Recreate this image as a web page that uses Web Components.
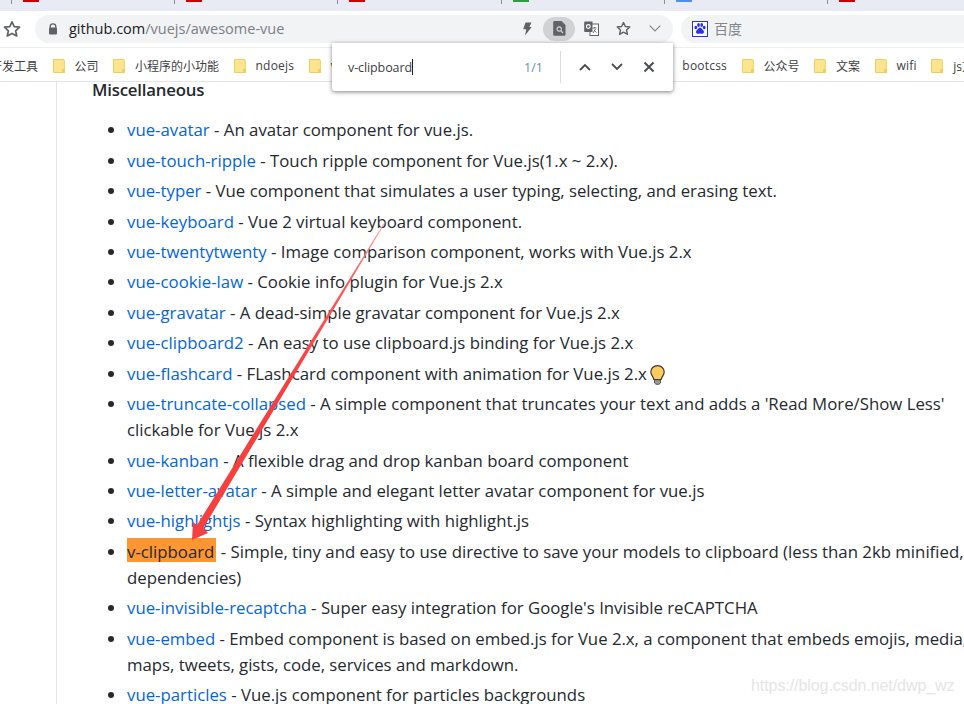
<!DOCTYPE html>
<html lang="zh">
<head>
<meta charset="utf-8">
<title>awesome-vue</title>
<style>
  html, body { margin: 0; height: 704px; overflow: hidden; background: #fff; }
  body { position: relative; font-family: "Open Sans", "Noto Sans CJK SC", sans-serif; }
</style>
</head>
<body>
<tab-strip>
  <tab-stub color="#cc0000"></tab-stub>
  <tab-stub color="#cc0000"></tab-stub>
  <tab-stub color="#cc0000"></tab-stub>
  <tab-stub color="#2e9e3f"></tab-stub>
  <tab-stub color="#4a90f0"></tab-stub>
  <tab-stub color="#cc0000"></tab-stub>
</tab-strip>
<url-toolbar></url-toolbar>
<bookmark-bar>
  <bookmark-item plain style="margin-left:-10px">开发工具</bookmark-item>
  <bookmark-item>公司</bookmark-item>
  <bookmark-item>小程序的小功能</bookmark-item>
  <bookmark-item style="letter-spacing:.2px">ndoejs</bookmark-item>
  <bookmark-item style="letter-spacing:.2px;margin-right:316.5px">vue</bookmark-item>
  <bookmark-item plain style="letter-spacing:.2px">bootcss</bookmark-item>
  <bookmark-item>公众号</bookmark-item>
  <bookmark-item>文案</bookmark-item>
  <bookmark-item style="letter-spacing:.2px">wifi</bookmark-item>
  <bookmark-item>js文档</bookmark-item>
</bookmark-bar>
<readme-page>
  <readme-item><a>vue-avatar</a> - An avatar component for vue.js.</readme-item>
  <readme-item><a>vue-touch-ripple</a> - Touch ripple component for Vue.js(1.x ~ 2.x).</readme-item>
  <readme-item><a>vue-typer</a> - Vue component that simulates a user typing, selecting, and erasing text.</readme-item>
  <readme-item><a>vue-keyboard</a> - Vue 2 virtual keyboard component.</readme-item>
  <readme-item><a>vue-twentytwenty</a> - Image comparison component, works with Vue.js 2.x</readme-item>
  <readme-item><a>vue-cookie-law</a> - Cookie info plugin for Vue.js 2.x</readme-item>
  <readme-item><a>vue-gravatar</a> - A dead-simple gravatar component for Vue.js 2.x</readme-item>
  <readme-item><a>vue-clipboard2</a> - An easy to use clipboard.js binding for Vue.js 2.x</readme-item>
  <readme-item><a>vue-flashcard</a> - FLashcard component with animation for Vue.js 2.x <bulb-icon></bulb-icon></readme-item>
  <readme-item><a>vue-truncate-collapsed</a> - A simple component that truncates your text and adds a 'Read More/Show Less'<br>clickable for Vue.js 2.x</readme-item>
  <readme-item><a>vue-kanban</a> - A flexible drag and drop kanban board component</readme-item>
  <readme-item><a>vue-letter-avatar</a> - A simple and elegant letter avatar component for vue.js</readme-item>
  <readme-item><a>vue-highlightjs</a> - Syntax highlighting with highlight.js</readme-item>
  <readme-item><mark>v-clipboard</mark> - Simple, tiny and easy to use directive to save your models to clipboard (less than 2kb minified, no<br>dependencies)</readme-item>
  <readme-item><a>vue-invisible-recaptcha</a> - Super easy integration for Google's Invisible reCAPTCHA</readme-item>
  <readme-item style="letter-spacing:-.02px"><a>vue-embed</a> - Embed component is based on embed.js for Vue 2.x, a component that embeds emojis, media,<br>maps, tweets, gists, code, services and markdown.</readme-item>
  <readme-item><a>vue-particles</a> - Vue.js component for particles backgrounds</readme-item>
</readme-page>
<find-bar></find-bar>
<red-arrow></red-arrow>
<blog-watermark>https://blog.csdn.net/dwp_wz</blog-watermark>

<script>
// tabs, only the bottom few pixels are visible
class TabStrip extends HTMLElement {
  constructor() {
    super();
    this.attachShadow({ mode: "open" }).innerHTML = `
      <style>
        :host { display: flex; height: 11px; background: #e8ebf4; padding-left: 11px; overflow: hidden; }
      </style>
      <slot></slot>`;
  }
}

class TabStub extends HTMLElement {
  constructor() {
    super();
    const color = this.getAttribute("color");
    this.attachShadow({ mode: "open" }).innerHTML = `
      <style>
        :host { display: block; width: 163.2px; flex: none; }
        .sep { width: 1px; height: 4px; background: #8a8d93; }
        .fav { width: 16px; height: 2px; margin: -4px 0 0 12px; background: ${color}; }
      </style>
      <div class="sep"></div>
      <div class="fav"></div>`;
  }
}

const STAR = `<path d="M8 1.6l2 4.3 4.7.5-3.5 3.2 1 4.600L8 11.900l-4.200 2.300 1-4.600L1.300 6.400 6 5.900z" fill="none" stroke="#5f6368" stroke-width="1.5" stroke-linejoin="round"/>`;

class UrlToolbar extends HTMLElement {
  constructor() {
    super();
    this.attachShadow({ mode: "open" }).innerHTML = `
      <style>
        :host {
          display: flex; align-items: center; box-sizing: border-box; height: 37px; padding: 4px 0 5px 3px;
          background: #fff; border-bottom: 1px solid #eceef0; font-size: 14.5px;
        }
        svg { display: block; flex: none; }
        .star { margin-right: 14px; }
        .omni {
          flex: none; width: 638px; height: 28px; box-sizing: border-box; border-radius: 14px; background: #f1f3f4;
          display: flex; align-items: center; padding-left: 13px;
        }
        .url { margin-left: 11px; color: #7b8087; }
        .url b { font-weight: 400; color: #202124; }
        .actions { margin-left: auto; display: flex; align-items: center; gap: 0; }
        .slot { width: 32px; height: 24px; display: flex; align-items: center; justify-content: center; border-radius: 12px; }
        .on { background: #d0d2d3; }
        .search {
          flex: 1; margin-left: 8px; height: 28px; border-radius: 14px 0 0 14px; background: #f1f3f4;
          display: flex; align-items: center; padding-left: 11px; color: #80868b; font-size: 14px;
          font-family: "Noto Sans CJK SC", sans-serif;
        }
        .search span { margin: -2px 0 0 6px; }
      </style>
      <svg class="star" width="18" height="18" viewBox="0 0 16 16">${STAR}</svg>
      <div class="omni">
        <svg width="10" height="12" viewBox="0 0 10 12"><path d="M2.200 5V3.600a2.800 2.800 0 0 1 5.600 0V5" fill="none" stroke="#5f6368" stroke-width="1.300"/><rect x="1" y="4.600" width="8" height="7" rx="1" fill="#5f6368"/></svg>
        <span class="url"><b>github.com</b>/vuejs/awesome-vue</span>
        <div class="actions">
          <div class="slot"><svg width="10" height="14" viewBox="0 0 10 14"><path d="M3.500 0.500h6L7.300 5h2.400L3 13.500l1.300-6.300H1.200z" fill="#5f6368"/></svg></div>
          <div class="slot on"><svg width="13" height="15" viewBox="0 0 13 15"><path d="M1.500 0h7L12.500 4v9.500a1.300 1.300 0 0 1-1.300 1.300H1.500A1.300 1.300 0 0 1 .2 13.500V1.300A1.300 1.300 0 0 1 1.500 0z" fill="#5f6368"/><circle cx="6.200" cy="8" r="2.700" fill="#d0d2d3"/><circle cx="6.200" cy="8" r="1.600" fill="#5f6368"/><path d="M8 10l2 2" stroke="#d0d2d3" stroke-width="1.300"/></svg></div>
          <div class="slot"><svg width="15" height="15" viewBox="0 0 15 15"><rect x="6" y="3" width="8.500" height="11.500" fill="#fff" stroke="#5f6368"/><path d="M8.500 7h4M10.500 6v1.200M9 12l2.500-4M12.500 11.500L9.800 9" stroke="#5f6368" stroke-width=".9" fill="none"/><path d="M1 .5h7.500v10.500H1a.8.8 0 0 1-.8-.8V1.300A.8.8 0 0 1 1 .5z" fill="#5f6368"/><circle cx="4.300" cy="5.500" r="1.900" fill="none" stroke="#fff" stroke-width="1.100"/></svg></div>
          <div class="slot"><svg width="15" height="15" viewBox="0 0 16 16">${STAR}</svg></div>
          <div class="slot" style="margin-right:2px"><svg width="12" height="7" viewBox="0 0 12 7"><path d="M.7.7L6 6l5.300-5.300" fill="none" stroke="#80868b" stroke-width="1.100"/></svg></div>
        </div>
      </div>
      <div class="search">
        <svg width="16" height="16" viewBox="0 0 16 16">
          <rect x=".5" y=".5" width="15" height="15" fill="#fff" stroke="#2932e1"/>
          <g fill="#2932e1"><ellipse cx="3.800" cy="6.600" rx="1.400" ry="1.800"/><ellipse cx="6.500" cy="4" rx="1.400" ry="1.900"/><ellipse cx="9.700" cy="4" rx="1.400" ry="1.900"/><ellipse cx="12.200" cy="6.600" rx="1.400" ry="1.800"/><path d="M8 6.600c1.500 0 1.900 1.500 3.200 2.600 1.400 1.200.8 3.500-1.100 3.500-.8 0-1.300-.3-2.100-.3s-1.300.3-2.100.3c-1.900 0-2.500-2.300-1.100-3.500C6.100 8.100 6.500 6.600 8 6.600z"/></g>
        </svg>
        <span>百度</span>
      </div>`;
  }
}

class BookmarkBar extends HTMLElement {
  constructor() {
    super();
    this.attachShadow({ mode: "open" }).innerHTML = `
      <style>
        :host {
          display: flex; align-items: center; gap: 14.5px; box-sizing: border-box; height: 34px; padding-top: 2px;
          background: #fff; border-bottom: 1px solid #e3e4e6; overflow: hidden; white-space: nowrap;
          font-size: 12px; color: #3c4043;
        }
      </style>
      <slot></slot>`;
  }
}

class BookmarkItem extends HTMLElement {
  constructor() {
    super();
    const folder = this.hasAttribute("plain") ? "" : `
      <svg width="12" height="14" viewBox="0 0 12 14">
        <path d="M.5.5h9.800a1 1 0 0 1 1 1V10.500H9.500v3H.5z" fill="#fde48f" stroke="#efcf5c"/>
        <rect x="9" y="10" width="3" height="4" fill="#efcf5c"/>
      </svg>`;
    this.attachShadow({ mode: "open" }).innerHTML = `
      <style>
        :host { display: flex; flex: none; align-items: center; gap: 10px; }
        svg { display: block; }
      </style>
      ${folder}<span><slot></slot></span>`;
  }
}

class ReadmePage extends HTMLElement {
  constructor() {
    super();
    this.attachShadow({ mode: "open" }).innerHTML = `
      <style>
        :host { display: flex; height: 622px; overflow: hidden; color: #24292e; }
        .side { flex: none; width: 56px; border-right: 1px solid #e1e4e8; }
        .body { flex: 1; padding-left: 35px; min-width: 0; }
        h3 { margin: 0 0 19.2px; font-size: 16.800px; line-height: 16px; font-weight: 600; letter-spacing: -.2px; }
        .list { padding-left: 35px; }
      </style>
      <div class="side"></div>
      <div class="body">
        <h3>Miscellaneous</h3>
        <div class="list"><slot></slot></div>
      </div>`;
  }
}

class ReadmeItem extends HTMLElement {
  constructor() {
    super();
    this.attachShadow({ mode: "open" }).innerHTML = `
      <style>
        :host {
          display: block; position: relative; margin-bottom: 4.450px; font-size: 16.800px; line-height: 26px;
          white-space: nowrap;
        }
        .dot { position: absolute; left: -19px; top: 10px; width: 6px; height: 6px; border-radius: 50%; background: #24292e; }
        ::slotted(a) { color: #0366d6; }
        ::slotted(mark) {
          color: #24292e; padding: 2px 2px 0 0;
          background: linear-gradient(#ff9632, #ff9632) 0 0 / 100% 24px no-repeat;
        }
      </style>
      <span class="dot"></span><slot></slot>`;
  }
}

class BulbIcon extends HTMLElement {
  constructor() {
    super();
    this.attachShadow({ mode: "open" }).innerHTML = `
      <style>
        :host { display: inline-block; width: 15px; height: 20px; margin-left: -1px; vertical-align: -5px; }
        svg { display: block; }
      </style>
      <svg width="15" height="20" viewBox="0 0 15 20">
        <path d="M7.500.7C3.700.7.800 3.500.800 7c0 3 2.400 4.300 3 7.500h7.400c.6-3.200 3-4.500 3-7.500 0-3.500-2.900-6.300-6.700-6.300z" fill="#ffcc5c" stroke="#3a3a3a" stroke-width="1.200"/>
        <path d="M4.500 14.800h6v3.200l-1.500 1.300H6l-1.500-1.300z" fill="#9a9a9a" stroke="#3a3a3a" stroke-width=".8"/>
      </svg>`;
  }
}

class FindBar extends HTMLElement {
  constructor() {
    super();
    this.attachShadow({ mode: "open" }).innerHTML = `
      <style>
        :host {
          position: absolute; left: 332px; top: 43px; width: 341px; height: 48px; box-sizing: border-box;
          display: flex; align-items: center; background: #fff; border-radius: 0 0 3px 3px;
          box-shadow: 0 1px 4px rgba(0,0,0,.5); font-size: 12.500px; color: #3c4043;
        }
        .text { margin-left: 16px; width: 176px; display: flex; align-items: center; letter-spacing: -.1px; }
        .caret { width: 1px; height: 16px; background: #202124; }
        .count { width: 36px; color: #6e8db0; font-size: 12.500px; }
        .div { width: 1px; height: 32px; background: #dadce0; }
        .btn { width: 32px; display: flex; justify-content: center; }
        svg { display: block; }
      </style>
      <div class="text">v-clipboard<span class="caret"></span></div>
      <div class="count">1/1</div>
      <div class="div"></div>
      <div class="btn" style="margin-left:8px"><svg width="12" height="8" viewBox="0 0 12 8"><path d="M1 7l5-5 5 5" fill="none" stroke="#4a4d51" stroke-width="1.800"/></svg></div>
      <div class="btn"><svg width="12" height="8" viewBox="0 0 12 8"><path d="M1 1l5 5 5-5" fill="none" stroke="#4a4d51" stroke-width="1.800"/></svg></div>
      <div class="btn"><svg width="12" height="12" viewBox="0 0 12 12"><path d="M1.500 1.500l9 9M10.500 1.500l-9 9" fill="none" stroke="#4a4d51" stroke-width="2"/></svg></div>`;
  }
}

// hand drawn annotation on top of the screenshot
class RedArrow extends HTMLElement {
  constructor() {
    super();
    this.attachShadow({ mode: "open" }).innerHTML = `
      <style>
        :host { position: absolute; left: 0; top: 0; pointer-events: none; }
        svg { display: block; }
      </style>
      <svg width="964" height="704" viewBox="0 0 964 704">
        <defs>
          <linearGradient id="g" x1="385" y1="222" x2="192" y2="540" gradientUnits="userSpaceOnUse">
            <stop offset="0" stop-color="#ff9c9c"/><stop offset=".2" stop-color="#fb5a5a"/><stop offset=".5" stop-color="#f63f3f"/>
          </linearGradient>
        </defs>
        <polygon points="385.400,222.300 203.500,528 208,533 192,540 193,522 197,525 384.800,221.800" fill="url(#g)"/>
      </svg>`;
  }
}

class BlogWatermark extends HTMLElement {
  constructor() {
    super();
    this.attachShadow({ mode: "open" }).innerHTML = `
      <style>
        :host {
          position: absolute; left: 751px; top: 677px; font: 16px/18px "Liberation Sans", sans-serif;
          color: #e5e5e5; white-space: nowrap; letter-spacing: -.07px;
        }
      </style>
      <slot></slot>`;
  }
}

customElements.define("tab-strip", TabStrip);
customElements.define("tab-stub", TabStub);
customElements.define("url-toolbar", UrlToolbar);
customElements.define("bookmark-bar", BookmarkBar);
customElements.define("bookmark-item", BookmarkItem);
customElements.define("readme-page", ReadmePage);
customElements.define("readme-item", ReadmeItem);
customElements.define("bulb-icon", BulbIcon);
customElements.define("find-bar", FindBar);
customElements.define("red-arrow", RedArrow);
customElements.define("blog-watermark", BlogWatermark);
</script>
</body>
</html>
